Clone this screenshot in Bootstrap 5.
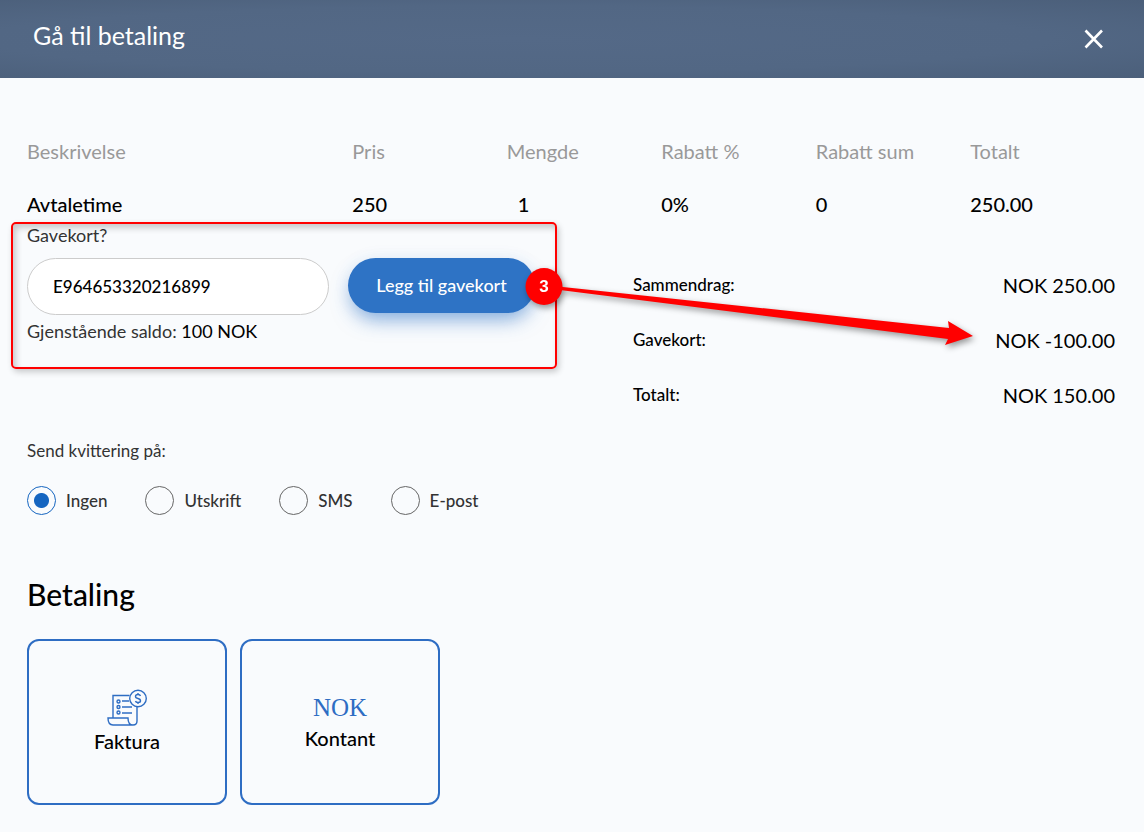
<!DOCTYPE html>
<html lang="no">
<head>
<meta charset="utf-8">
<meta name="viewport" content="width=device-width, initial-scale=1">
<title>Gå til betaling</title>
<link href="https://cdn.jsdelivr.net/npm/bootstrap@5.3.0/dist/css/bootstrap.min.css" rel="stylesheet">
<style>
  body { font-family: Lato, Carlito, "Liberation Sans", sans-serif; background: #f9fbfd; color: #000; font-size: 17px; line-height: 24px; }
  .pay-header { height: 78px; padding: 0 40px 0 33px; color: #fff; background: radial-gradient(ellipse at 45% 50%, #546987 0%, #526784 60%, #4b5f7a 100%); }
  .pay-header h1 { font-size: 25px; line-height: 32px; font-weight: 400; margin: 0 0 8px; }
  .close-btn { background: none; border: 0; padding: 0; width: 20px; height: 20px; display: flex; }
  .pay-body { padding: 59px 29px 24px 27px; }
  .order-table { width: 100%; table-layout: fixed; font-size: 20px; line-height: 28px; }
  .order-table th { color: #999; font-weight: 400; padding: 0; }
  .order-table td { font-weight: 500; padding: 25px 0 0; }
  .order-table th, .order-table td { width: 14.2%; white-space: nowrap; }
  .order-table th:first-child, .order-table td:first-child { width: 29.9%; }
  .order-table th:last-child, .order-table td:last-child { width: auto; }
  .order-table td.qty { padding-left: 11px; }
  .order-details { display: grid; grid-template-columns: 606fr 482fr; position: relative; padding-top: 5px; }
  .soft-text { color: #333; }
  .gift-form { font-size: 18px; }
  .gift-row { margin-top: 11px; gap: 19px; }
  .gift-input { width: 302px; height: 57px; border: 1px solid #ccc; border-radius: 29px; padding: 0 25px; background: #fff; font-size: 17px; color: #000; font-weight: 500; }
  .gift-btn { width: 187px; height: 55px; border: 0; border-radius: 28px; background: #2e73c5; color: #fff; font-size: 18px; font-weight: 500; padding: 0 0 2px; box-shadow: 0 10px 20px -4px rgba(46,115,197,.6), 0 0 18px rgba(46,115,197,.06); }
  .summary { padding-top: 48px; }
  .summary > div { height: 55px; line-height: 28px; }
  .summary > div:last-child { height: 28px; }
  .summary dd { font-size: 20px; margin: 0; }
  .summary dt { font-weight: 500; }
  .callout-box { position: absolute; left: -16px; top: 4px; width: 546px; height: 147px; border: 2px solid #f00; border-radius: 5px; box-shadow: 2px 3px 6px rgba(0,0,0,.2), inset 3px 4px 6px rgba(0,0,0,.2); pointer-events: none; }
  .callout-arrow { position: absolute; left: 491px; top: 39px; pointer-events: none; overflow: visible; filter: drop-shadow(2px 3px 3px rgba(0,0,0,.4)); }
  .receipt { margin-top: 30px; }
  .receipt-options { margin-top: 23px; gap: 38px; }
  .receipt-options label { font-weight: 500; color: #333; gap: 10px; }
  .receipt-options input { appearance: none; width: 29px; height: 29px; margin: 0; border: 1px solid #666; border-radius: 50%; }
  .receipt-options input:checked { border-color: #1565c0; background: radial-gradient(circle, #1565c0 0 7px, transparent 8px); }
  .pay-title { font-size: 30px; line-height: 40px; font-weight: 500; margin: 59px 0 25px; }
  .methods { gap: 13px; }
  .method { width: 200px; height: 166px; border: 2px solid #2e6dc3; border-radius: 12px; background: none; font-size: 20px; line-height: 28px; font-weight: 500; color: #000; padding: 0; }
  .nok { font-family: "Liberation Serif", serif; font-size: 25px; line-height: 32px; font-weight: 400; color: #2e6dc3; }
</style>
</head>
<body>
<header class="pay-header d-flex align-items-center justify-content-between">
  <h1>Gå til betaling</h1>
  <button class="close-btn" type="button" aria-label="Lukk">
    <svg width="20" height="20" viewBox="0 0 20 20" stroke="#fff" stroke-width="2.6"><path d="M1.500 1.500l16.500 17M18 1.500L1.500 18.500"/></svg>
  </button>
</header>
<main class="pay-body">
  <table class="order-table">
    <thead><tr><th>Beskrivelse</th><th>Pris</th><th>Mengde</th><th>Rabatt %</th><th>Rabatt sum</th><th>Totalt</th></tr></thead>
    <tbody><tr><td>Avtaletime</td><td>250</td><td class="qty">1</td><td>0%</td><td>0</td><td>250.00</td></tr></tbody>
  </table>

  <section class="order-details">
    <form class="gift-form">
      <label class="soft-text d-block" for="gift">Gavekort?</label>
      <div class="d-flex gift-row">
        <input class="gift-input" id="gift" type="text" value="E964653320216899">
        <button class="gift-btn" type="button">Legg til gavekort</button>
      </div>
      <div class="mt-1"><span class="soft-text">Gjenstående saldo:</span> 100 NOK</div>
    </form>
    <dl class="summary mb-0">
      <div class="d-flex justify-content-between"><dt>Sammendrag:</dt><dd>NOK 250.00</dd></div>
      <div class="d-flex justify-content-between"><dt>Gavekort:</dt><dd>NOK -100.00</dd></div>
      <div class="d-flex justify-content-between"><dt>Totalt:</dt><dd>NOK 150.00</dd></div>
    </dl>
    <div class="callout-box"></div>
    <svg class="callout-arrow" width="460" height="90" viewBox="0 0 460 90">
      <path fill="#f00" d="M26 28V31L430 82 427 88 455 79 430 64 431 71Z"/>
      <circle cx="26" cy="29.500" r="18.500" fill="#f00"/>
      <text x="26" y="35" fill="#fff" text-anchor="middle" font-family="Liberation Sans, sans-serif" font-weight="700" font-size="17">3</text>
    </svg>
  </section>

  <section class="receipt">
    <div class="soft-text">Send kvittering på:</div>
    <div class="receipt-options d-flex">
      <label class="d-flex align-items-center"><input type="radio" name="receipt" checked>Ingen</label>
      <label class="d-flex align-items-center"><input type="radio" name="receipt">Utskrift</label>
      <label class="d-flex align-items-center"><input type="radio" name="receipt">SMS</label>
      <label class="d-flex align-items-center"><input type="radio" name="receipt">E-post</label>
    </div>
  </section>

  <h2 class="pay-title">Betaling</h2>
  <div class="d-flex methods">
    <button class="method d-flex flex-column align-items-center justify-content-center" type="button">
      <svg width="40" height="38" viewBox="0 0 40 38" fill="none" stroke="#2e6dc3" stroke-width="1.400">
        <path d="M6 28.500V6.500H22.500M30 17.500V32Q30 36 26 36H6Q1 36 1 29H21Q21 36 26 36M15 12h7M15 18h10M15 24h10"/>
        <circle cx="11.500" cy="12.500" r="1.500"/><circle cx="11.500" cy="18" r="1.500"/><circle cx="11.500" cy="23.500" r="1.500"/>
        <circle cx="31" cy="9.500" r="8.300"/>
        <path d="M33.500 7Q33 5.500 31 5.500 28.500 5.500 28.500 7.500 28.500 9 31 9.500 33.500 10 33.500 12 33.500 13.500 31 13.500 28.800 13.500 28.500 12M31 4v1.500M31 13.500V15"/>
      </svg>
      Faktura
    </button>
    <button class="method d-flex flex-column align-items-center justify-content-center" type="button">
      <span class="nok">NOK</span>
      Kontant
    </button>
  </div>
</main>
<script src="https://cdn.jsdelivr.net/npm/bootstrap@5.3.0/dist/js/bootstrap.bundle.min.js"></script>
</body>
</html>
